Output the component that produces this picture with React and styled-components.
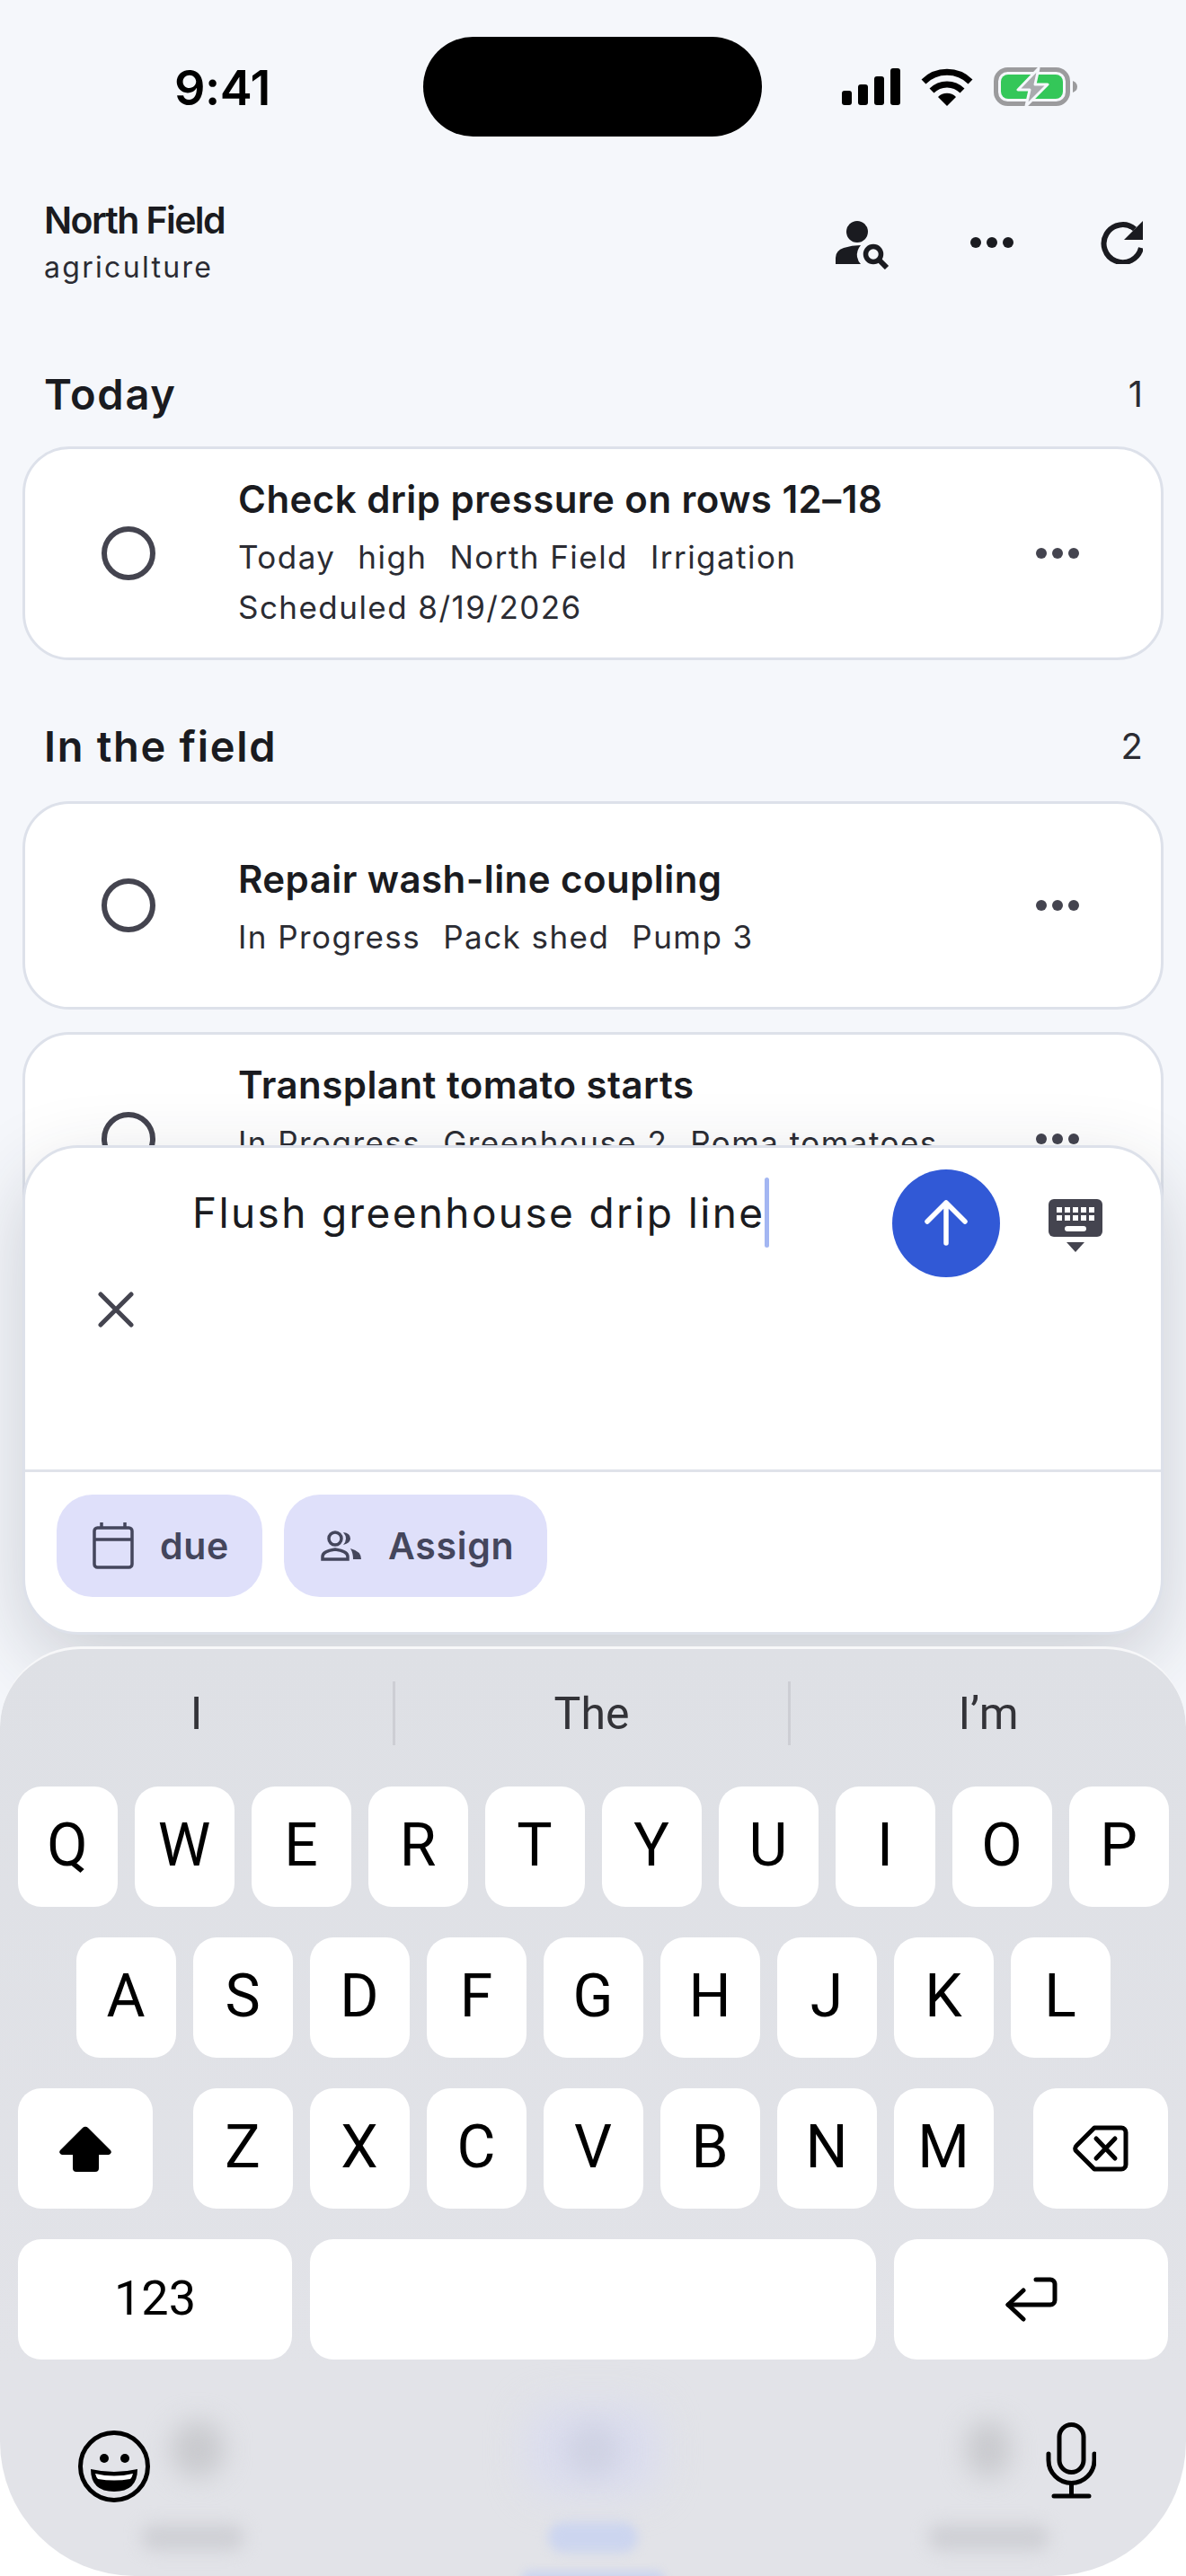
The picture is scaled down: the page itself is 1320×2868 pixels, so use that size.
import React from "react";
import styled, { createGlobalStyle } from "styled-components";

const Global = createGlobalStyle`
  html, body {
    margin: 0;
    padding: 0;
    background: #f5f7fb;
    font-family: Inter, "Liberation Sans", sans-serif;
  }
  * { box-sizing: border-box; }
`;

const Screen = styled.div`
  position: relative;
  width: 1320px;
  height: 2868px;
  overflow: hidden;
  background: linear-gradient(#f5f7fb 2600px, #ffffff 2700px);
  color: #1a1b20;
`;

const StatusBar = styled.div`
  display: grid;
  grid-template-columns: 471px 377px 1fr;
  align-items: center;
  padding-top: 41px;
`;

const Time = styled.div`
  padding-left: 194px;
  font-size: 54px;
  font-weight: 600;
  line-height: 111px;
  color: #000;
  letter-spacing: -0.5px;
  position: relative;
  top: 1px;
`;

const Island = styled.div`
  height: 111px;
  border-radius: 56px;
  background: #000;
`;

const StatusIcons = styled.div`
  display: flex;
  align-items: center;
  padding-left: 89px;
  gap: 23px;
  svg { display: block; }
`;

const Header = styled.header`
  display: flex;
  justify-content: space-between;
  align-items: flex-start;
  padding: 68px 0 0 49px;
  height: 174px;
`;

const Brand = styled.div`
  display: flex;
  flex-direction: column;
`;

const BrandName = styled.div`
  font-size: 41px;
  font-weight: 600;
  line-height: 50px;
  letter-spacing: -1.6px;
`;

const BrandSub = styled.div`
  font-size: 32px;
  line-height: 56px;
  letter-spacing: 2.3px;
  color: #2b2c33;
`;

const HeaderActions = styled.div`
  display: flex;
`;

const HeaderButton = styled.div`
  width: 144px;
  height: 100px;
  display: flex;
  align-items: center;
  justify-content: center;
  padding-top: ${(p) => p.$shift || 0}px;
`;

const SectionHead = styled.div`
  display: flex;
  justify-content: space-between;
  align-items: center;
  height: 60px;
  margin: ${(p) => p.$top}px 48px ${(p) => p.$bottom}px 49px;
`;

const SectionTitle = styled.h2`
  margin: 0;
  font-size: 47px;
  font-weight: 600;
  letter-spacing: 1.7px;
`;

const SectionCount = styled.span`
  font-size: 40px;
  color: #2b2c33;
`;

const Card = styled.div`
  display: flex;
  align-items: center;
  height: ${(p) => p.$height}px;
  margin: 0 25px ${(p) => p.$gap || 0}px;
  background: #fff;
  border: 3px solid #dde1ea;
  border-radius: 52px;
`;

const Check = styled.div`
  flex: none;
  width: 60px;
  height: 60px;
  margin: 0 92px 0 85px;
  border: 6px solid #44444f;
  border-radius: 50%;
`;

const CardBody = styled.div`
  flex: 1;
  display: flex;
  flex-direction: column;
  padding-top: ${(p) => p.$offset || 0}px;
`;

const CardTitle = styled.div`
  font-size: 42px;
  font-weight: 600;
  line-height: 56px;
  letter-spacing: 0.45px;
  margin-bottom: 8px;
`;

const CardMeta = styled.div`
  display: flex;
  gap: 25px;
  min-height: 56px;
  font-size: 35px;
  line-height: 56px;
  letter-spacing: 1.45px;
  color: #2b2c33;
`;

const CardMore = styled.div`
  flex: none;
  width: 48px;
  margin-right: 91px;
  display: flex;
  svg { display: block; }
`;

const Sheet = styled.div`
  position: absolute;
  left: 0;
  right: 0;
  top: 1275px;
  bottom: 0;
  display: flex;
  flex-direction: column;
`;

const Composer = styled.div`
  height: 545px;
  margin: 0 25px;
  display: flex;
  flex-direction: column;
  background: #fff;
  border: 3px solid #dde1ea;
  border-radius: 62px;
  box-shadow: 0 30px 90px rgba(40, 44, 60, 0.2);
`;

const InputBody = styled.div`
  flex: none;
  height: 361px;
  display: flex;
  border-bottom: 3px solid #e0e3ea;
`;

const CloseCol = styled.div`
  flex: none;
  width: 186px;
  padding: 160px 0 0 81px;
  svg { display: block; }
`;

const InputLine = styled.div`
  flex: none;
  width: 779px;
  height: 78px;
  margin-top: 33px;
  display: flex;
  align-items: center;
  font-size: 46px;
  letter-spacing: 2.35px;
  color: #1a1b20;
`;

const Caret = styled.span`
  width: 5px;
  height: 78px;
  border-radius: 3px;
  background: #a3b6f2;
`;

const SendButton = styled.div`
  flex: none;
  width: 120px;
  height: 120px;
  margin-top: 24px;
  border-radius: 50%;
  background: #3159d6;
  display: flex;
  align-items: center;
  justify-content: center;
`;

const KeyboardToggle = styled.div`
  flex: none;
  margin: 57px 0 0 54px;
  svg { display: block; }
`;

const ChipRow = styled.div`
  display: flex;
  gap: 24px;
  padding: 25px 0 0 35px;
`;

const Chip = styled.div`
  height: 114px;
  display: flex;
  align-items: center;
  gap: ${(p) => p.$gap}px;
  padding: 0 37px 0 ${(p) => p.$left}px;
  border-radius: 40px;
  background: #dfe0fa;
  font-size: 41px;
  font-weight: 600;
  letter-spacing: 0.7px;
  color: #44465c;
  svg { display: block; }
`;

const Keyboard = styled.div`
  position: relative;
  flex: 1;
  margin-top: 13px;
  overflow: hidden;
  font-family: Roboto, Inter, sans-serif;
  background: linear-gradient(#dee0e5, #e2e3e8 800px);
  border-top: 3px solid rgba(255, 255, 255, 0.75);
  border-radius: 90px 90px 150px 150px;
`;

const Blur = styled.div`
  position: absolute;
  left: ${(p) => p.$x - p.$w / 2}px;
  top: ${(p) => p.$y - 1836 - p.$h / 2}px;
  width: ${(p) => p.$w}px;
  height: ${(p) => p.$h}px;
  border-radius: 30px;
  background: ${(p) => p.$c};
  filter: blur(${(p) => p.$r}px);
`;

const Suggestions = styled.div`
  position: relative;
  display: grid;
  grid-template-columns: 440px 440px 440px;
  height: 71px;
  margin-top: 36px;
`;

const Suggestion = styled.div`
  display: flex;
  align-items: center;
  justify-content: center;
  font-size: 50px;
  color: #333338;
  border-right: ${(p) => (p.$last ? "none" : "3px solid #cdced4")};
`;

const KeyRows = styled.div`
  position: relative;
  display: flex;
  flex-direction: column;
  gap: 34px;
  margin-top: 46px;
  padding: 0 20px;
`;

const KeyRow = styled.div`
  display: flex;
  justify-content: ${(p) => p.$justify || "center"};
  gap: ${(p) => (p.$justify ? 0 : 19)}px;
`;

const LetterGroup = styled.div`
  display: flex;
  gap: 19px;
`;

const Key = styled.div`
  flex: none;
  width: ${(p) => p.$w || 111}px;
  height: 134px;
  display: flex;
  align-items: center;
  justify-content: center;
  padding-bottom: ${(p) => (p.$icon ? 0 : 3)}px;
  background: #fff;
  border-radius: 26px;
  font-size: ${(p) => p.$size || 66}px;
  color: #000;
  svg { display: block; }
`;

const KeyFooter = styled.div`
  position: relative;
  display: flex;
  justify-content: space-between;
  align-items: flex-start;
  padding: 79px 100px 0 87px;
  svg { display: block; }
`;

const MicWrap = styled.div`
  margin-top: -9px;
`;

const Dots = ({ color }) => (
  <svg width="48" height="12" viewBox="0 0 48 12" fill={color}>
    <circle cx="6" cy="6" r="6" />
    <circle cx="24" cy="6" r="6" />
    <circle cx="42" cy="6" r="6" />
  </svg>
);

const tasks = {
  today: [
    {
      title: "Check drip pressure on rows 12–18",
      height: 238,
      meta: [["Today", "high", "North Field", "Irrigation"], ["Scheduled 8/19/2026"]],
    },
  ],
  field: [
    { title: "Repair wash-line coupling", height: 232, gap: 25, offset: 6, meta: [["In Progress", "Pack shed", "Pump 3"]] },
    { title: "Transplant tomato starts", height: 238, meta: [["In Progress", "Greenhouse 2", "Roma tomatoes"], []] },
  ],
};

const TaskCard = ({ task }) => (
  <Card $height={task.height} $gap={task.gap}>
    <Check />
    <CardBody $offset={task.offset}>
      <CardTitle>{task.title}</CardTitle>
      {task.meta.map((row, i) => (
        <CardMeta key={i}>
          {row.map((m) => (
            <span key={m}>{m}</span>
          ))}
        </CardMeta>
      ))}
    </CardBody>
    <CardMore>
      <Dots color="#44444f" />
    </CardMore>
  </Card>
);

const rows = ["QWERTYUIOP", "ASDFGHJKL"];

export default function App() {
  return (
    <Screen>
      <Global />
      <StatusBar>
        <Time>9:41</Time>
        <Island />
        <StatusIcons>
          <svg width="65" height="41" viewBox="0 0 65 41" fill="#000">
            <rect x="0" y="25" width="11" height="16" rx="3" />
            <rect x="18" y="18" width="11" height="23" rx="3" />
            <rect x="36" y="9" width="11" height="32" rx="3" />
            <rect x="54" y="0" width="11" height="41" rx="3" />
          </svg>
          <svg width="58" height="42" viewBox="0 0 58 42" fill="none" stroke="#000">
            <path d="M3 15 A37 37 0 0 1 55 15" strokeWidth="7" />
            <path d="M12 25 A24 24 0 0 1 46 25" strokeWidth="7" />
            <path d="M29 42 L19 32 A14 14 0 0 1 39 32 Z" fill="#000" stroke="none" />
          </svg>
          <svg width="93" height="44" viewBox="0 0 93 44">
            <rect x="2.5" y="2.5" width="80" height="38" rx="13" fill="none" stroke="#9b9b9d" strokeWidth="5" />
            <rect x="8" y="8" width="69" height="27" rx="8" fill="#34c759" />
            <path d="M88 15 Q93 17 93 21.5 Q93 26 88 28 Z" fill="#9b9b9d" />
            <path d="M50 1 L27 25 H40 L36 43 L60 19 H46 Z" fill="#a9aaae" stroke="#f5f7fb" strokeWidth="3" strokeLinejoin="round" />
          </svg>
        </StatusIcons>
      </StatusBar>

      <Header>
        <Brand>
          <BrandName>North Field</BrandName>
          <BrandSub>agriculture</BrandSub>
        </Brand>
        <HeaderActions>
          <HeaderButton $shift={5}>
            <svg width="60" height="54" viewBox="0 0 60 54" fill="#1a1b20">
              <circle cx="24" cy="12" r="12" />
              <path d="M0 48 V41 Q0 33 9 30 Q18 27 28 27 Q23 33 24 40 Q25 45 28 48 Z" />
              <circle cx="42" cy="37" r="8.5" fill="none" stroke="#1a1b20" strokeWidth="5.5" />
              <path d="M48 43 L57 52" stroke="#1a1b20" strokeWidth="6" />
            </svg>
          </HeaderButton>
          <HeaderButton>
            <Dots color="#1a1b20" />
          </HeaderButton>
          <HeaderButton>
            <svg width="48" height="48" viewBox="0 0 48 48">
              <path d="M46 30 A21 21 0 1 1 39 9" fill="none" stroke="#1a1b20" strokeWidth="6" />
              <path d="M48 0 V21 H27 Z" fill="#1a1b20" />
            </svg>
          </HeaderButton>
        </HeaderActions>
      </Header>

      <SectionHead $top={82} $bottom={29}>
        <SectionTitle>Today</SectionTitle>
        <SectionCount>1</SectionCount>
      </SectionHead>
      {tasks.today.map((t) => (
        <TaskCard key={t.title} task={t} />
      ))}

      <SectionHead $top={65} $bottom={32}>
        <SectionTitle>In the field</SectionTitle>
        <SectionCount>2</SectionCount>
      </SectionHead>
      {tasks.field.map((t) => (
        <TaskCard key={t.title} task={t} />
      ))}

      <Sheet>
        <Composer>
          <InputBody>
            <CloseCol>
              <svg width="40" height="40" viewBox="0 0 40 40" stroke="#44444f" strokeWidth="5" strokeLinecap="round">
                <path d="M3 3 L37 37 M37 3 L3 37" />
              </svg>
            </CloseCol>
            <InputLine>
              Flush greenhouse drip line
              <Caret />
            </InputLine>
            <SendButton>
              <svg width="52" height="52" viewBox="0 0 52 52" fill="none" stroke="#fff" strokeWidth="5.5" strokeLinecap="round" strokeLinejoin="round">
                <path d="M26 48 V3 M5 24 L26 3 L47 24" />
              </svg>
            </SendButton>
            <KeyboardToggle>
              <svg width="60" height="60" viewBox="0 0 60 60" fill="#44444f">
                <rect width="60" height="42" rx="6" />
                <g fill="#fff">
                  {[9, 18, 27, 36, 45].map((x) => (
                    <React.Fragment key={x}>
                      <rect x={x} y="9" width="6" height="6" />
                      <rect x={x} y="18" width="6" height="6" />
                    </React.Fragment>
                  ))}
                  <rect x="18" y="30" width="24" height="6" rx="3" />
                </g>
                <path d="M20 48 H40 L30 59 Z" />
              </svg>
            </KeyboardToggle>
          </InputBody>
          <ChipRow>
            <Chip $left={40} $gap={29}>
              <svg width="46" height="52" viewBox="0 0 46 52" fill="none" stroke="#44465c" strokeWidth="3.5">
                <rect x="2" y="6" width="42" height="44" rx="3.5" />
                <path d="M2 19 H44 M10 0 V6 M36 0 V6" />
              </svg>
              <span>due</span>
            </Chip>
            <Chip $left={41} $gap={29}>
              <svg width="46" height="34" viewBox="0 0 46 34" fill="none" stroke="#44465c" strokeWidth="3.5">
                <circle cx="16" cy="9" r="7" />
                <path d="M2 32 V29 Q2 23 16 21 Q30 23 30 29 V32 Z" />
                <path d="M25 2 Q31 9 25 16 Q33 14 33 9 Q33 3 25 2 Z" fill="#44465c" stroke="none" />
                <path d="M33 20 Q45 23 45 32 H36 Q36 25 33 20 Z" fill="#44465c" stroke="none" />
              </svg>
              <span>Assign</span>
            </Chip>
          </ChipRow>
        </Composer>

        <Keyboard>
          <Blur $x={220} $y={2727} $w={60} $h={64} $c="#c9cace" $r={14} />
          <Blur $x={660} $y={2728} $w={150} $h={100} $c="#dbddee" $r={20} />
          <Blur $x={660} $y={2728} $w={60} $h={60} $c="#cfd2e3" $r={14} />
          <Blur $x={1100} $y={2727} $w={50} $h={64} $c="#c9cace" $r={14} />
          <Blur $x={214} $y={2825} $w={115} $h={30} $c="#cfd0d5" $r={9} />
          <Blur $x={660} $y={2825} $w={100} $h={34} $c="#ccd5ef" $r={6} />
          <Blur $x={1100} $y={2825} $w={135} $h={30} $c="#cfd0d5" $r={9} />
          <Blur $x={660} $y={2872} $w={160} $h={20} $c="#ccd5ef" $r={5} />
          <Suggestions>
            <Suggestion>I</Suggestion>
            <Suggestion>The</Suggestion>
            <Suggestion $last>I’m</Suggestion>
          </Suggestions>
          <KeyRows>
            {rows.map((r) => (
              <KeyRow key={r}>
                {r.split("").map((c) => (
                  <Key key={c}>{c}</Key>
                ))}
              </KeyRow>
            ))}
            <KeyRow $justify="space-between">
              <Key $w={150} $icon>
                <svg width="60" height="51" viewBox="0 0 60 51" fill="#000">
                  <path d="M27 2 a4 4 0 0 1 6 0 L58 27 a3 3 0 0 1 -2 5 H45 V47 a4 4 0 0 1 -4 4 H20 a4 4 0 0 1 -4 -4 V32 H4 a3 3 0 0 1 -2 -5 Z" />
                </svg>
              </Key>
              <LetterGroup>
                {"ZXCVBNM".split("").map((c) => (
                  <Key key={c}>{c}</Key>
                ))}
              </LetterGroup>
              <Key $w={150} $icon>
                <svg width="62" height="52" viewBox="0 0 62 52" fill="none" stroke="#000" strokeWidth="5" strokeLinejoin="round" strokeLinecap="round">
                  <path d="M24 3 H54 a5 5 0 0 1 5 5 V44 a5 5 0 0 1 -5 5 H24 L4 29 a4 4 0 0 1 0 -6 Z" />
                  <path d="M26 15 L47 37 M47 15 L26 37" />
                </svg>
              </Key>
            </KeyRow>
            <KeyRow $justify="space-between">
              <Key $w={305} $size={54}>123</Key>
              <Key $w={630} $icon />
              <Key $w={305} $icon>
                <svg width="58" height="50" viewBox="0 0 58 50" fill="none" stroke="#000" strokeWidth="5" strokeLinejoin="round" strokeLinecap="round">
                  <path d="M34 3 H50 a5 5 0 0 1 5 5 V26 a5 5 0 0 1 -5 5 H3" />
                  <path d="M20 15 L3 31 L20 47" />
                </svg>
              </Key>
            </KeyRow>
          </KeyRows>
          <KeyFooter>
            <svg width="80" height="80" viewBox="0 0 80 80">
              <circle cx="40" cy="40" r="37.5" fill="none" stroke="#000" strokeWidth="5" />
              <circle cx="29" cy="31" r="5" fill="#000" />
              <circle cx="52" cy="31" r="5" fill="#000" />
              <path d="M14 43 Q40 49 66 43 Q66 68 40 68 Q14 68 14 43 Z" fill="#000" />
              <path d="M19 48 Q40 53 61 48 Q60 52 58 54 Q40 57 22 54 Q20 52 19 48 Z" fill="#fff" />
            </svg>
            <MicWrap>
              <svg width="56" height="86" viewBox="0 0 56 86" fill="none" stroke="#000" strokeWidth="5" strokeLinecap="round">
                <rect x="15" y="2.5" width="27" height="53" rx="13.5" />
                <path d="M3 35 V42 A25.5 25.5 0 0 0 54 42 V35" />
                <path d="M28.5 68 V82 M9 82 H48" />
              </svg>
            </MicWrap>
          </KeyFooter>
        </Keyboard>
      </Sheet>
    </Screen>
  );
}
